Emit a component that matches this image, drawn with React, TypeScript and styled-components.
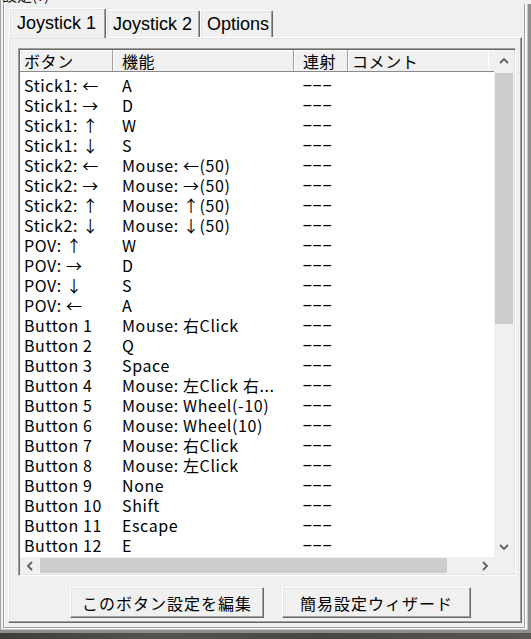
import React from "react";
import styled, { createGlobalStyle } from "styled-components";

const Global = createGlobalStyle`
  html, body { margin: 0; padding: 0; background: #f0f0f0; }
  body { width: 531px; height: 639px; overflow: hidden; }
  * { box-sizing: border-box; }
`;

const UI_FONT = `"Noto Sans CJK JP", "Noto Sans", sans-serif`;

const Screen = styled.div`
  width: 531px;
  height: 639px;
  display: flex;
  flex-direction: column;
  background: #f0f0f0;
  overflow: hidden;
  font-family: ${UI_FONT};
  color: #000;
`;

const TitleClip = styled.div`
  height: 4px;
  flex: none;
  overflow: hidden;
  border-left: 1px solid #a0a0a0;
`;

const TitleText = styled.div`
  margin-top: -13px;
  padding-left: 1px;
  font-size: 15px;
  line-height: 16px;
  color: #222;
`;

const Window = styled.div`
  height: 629px;
  flex: none;
  display: flex;
  flex-direction: column;
  border-left: 1px solid #a0a0a0;
  border-right: 3px solid #8e8e8e;
  border-bottom: 3px solid #8e8e8e;
  box-shadow: inset -1px -1px 0 #c8c8c8;
`;

const GroupBox = styled.div`
  flex: 1;
  margin: 0 3px 2px 2px;
  padding: 4px 2px 4px 4px;
  border-left: 1px solid #a0a0a0;
  border-right: 1px solid #a0a0a0;
  border-bottom: 1px solid #a0a0a0;
  box-shadow: inset 1px 0 0 #fff, 1px 0 0 #fff, 0 1px 0 #fff;
  display: flex;
  flex-direction: column;
`;

const TabStrip = styled.div`
  height: 29px;
  flex: none;
  display: flex;
  align-items: flex-end;
  padding-left: 1px;
`;

const Tab = styled.div<{ $active?: boolean; $w: number }>`
  position: relative;
  z-index: ${(p) => (p.$active ? 2 : 1)};
  width: ${(p) => p.$w}px;
  height: ${(p) => (p.$active ? "30px" : "27px")};
  margin-bottom: ${(p) => (p.$active ? "-1px" : "0")};
  padding: ${(p) => (p.$active ? "3px 0 0 7px" : "0 0 0 6px")};
  display: flex;
  align-items: ${(p) => (p.$active ? "flex-start" : "center")};
  background: #f0f0f0;
  border-top: 1px solid #fff;
  border-left: 1px solid #fff;
  border-right: 1px solid #696969;
  box-shadow: inset -1px 0 0 #a0a0a0, inset 1px 1px 0 #e3e3e3;
  border-radius: 2px 2px 0 0;
  font-family: "Liberation Sans", Arial, sans-serif;
  font-size: 18px;
  line-height: 23px;
  white-space: nowrap;
`;

const Pane = styled.div`
  flex: 1;
  display: flex;
  flex-direction: column;
  padding: 10px 1px 4px 9px;
  border-top: 1px solid #fff;
  border-left: 1px solid #fff;
  border-right: 1px solid #696969;
  border-bottom: 1px solid #696969;
  box-shadow: inset -1px -1px 0 #a0a0a0, inset 1px 1px 0 #e3e3e3;
`;

const ListView = styled.div`
  width: 498px;
  height: 528px;
  flex: none;
  border: 1px solid;
  border-color: #a0a0a0 #fff #fff #a0a0a0;
  box-shadow: inset 1px 1px 0 #696969, inset -1px -1px 0 #e3e3e3;
  padding: 1px;
  background: #fff;
  display: grid;
  grid-template-columns: 474px 20px;
  grid-template-rows: 507px 17px;
`;

const Content = styled.div`
  overflow: hidden;
  display: flex;
  flex-direction: column;
  background: #fff;
`;

const COLS = "93px 181px 54px 140px 6px";

const HeaderRow = styled.div`
  height: 22px;
  flex: none;
  display: grid;
  grid-template-columns: ${COLS};
  background: #f0f0f0;
  border-bottom: 1px solid #8a8a8a;
`;

const HeaderCell = styled.div<{ $pad: number; $last?: boolean }>`
  padding-left: ${(p) => p.$pad}px;
  padding-top: 2px;
  border-right: ${(p) => (p.$last ? "none" : "1px solid #a0a0a0")};
  box-shadow: inset 1px 1px 0 #fff;
  font-size: 16px;
  letter-spacing: 0.6px;
  line-height: 19px;
  white-space: nowrap;
`;

const Body = styled.div`
  padding-top: 3px;
  display: flex;
  flex-direction: column;
`;

const Row = styled.div`
  height: 20px;
  flex: none;
  display: grid;
  grid-template-columns: ${COLS};
  align-items: center;
`;

const Cell = styled.div<{ $pad: number }>`
  padding-left: ${(p) => p.$pad}px;
  font-size: 16px;
  letter-spacing: 0.6px;
  line-height: 20px;
  white-space: nowrap;
`;

const DashCell = styled.div`
  height: 20px;
  padding-left: 8px;
  display: flex;
  align-items: center;
  white-space: nowrap;
`;

const Dashes = styled.span`
  display: block;
  font-family: "Liberation Sans", Arial, sans-serif;
  font-size: 16px;
  line-height: 18px;
  letter-spacing: -0.4px;
  transform: scaleX(2);
  transform-origin: left center;
`;

const VScroll = styled.div`
  background: #f0f0f0;
  display: flex;
  flex-direction: column;
`;

const HScroll = styled.div`
  background: #f0f0f0;
  display: flex;
  align-items: stretch;
`;

const Corner = styled.div`
  background: #f0f0f0;
`;

const ArrowBox = styled.div<{ $w: number; $h: number }>`
  width: ${(p) => p.$w}px;
  height: ${(p) => p.$h}px;
  flex: none;
  display: flex;
  align-items: center;
  justify-content: center;
`;

const VThumb = styled.div`
  height: 251px;
  margin: 2px 1px 0 1px;
  flex: none;
  background: #cdcdcd;
`;

const HThumb = styled.div`
  width: 407px;
  margin: 1px 0;
  flex: none;
  background: #cdcdcd;
`;

const Spacer = styled.div`
  flex: 1;
`;

const ButtonRow = styled.div`
  margin-top: 11px;
  display: flex;
  gap: 18px;
  padding-left: 52px;
`;

const PushButton = styled.button<{ $w: number }>`
  width: ${(p) => p.$w}px;
  height: 31px;
  padding: 0;
  background: #f0f0f0;
  border: 1px solid;
  border-color: #fff #696969 #696969 #fff;
  box-shadow: inset -1px -1px 0 #a0a0a0, inset 1px 1px 0 #e3e3e3;
  font-family: ${UI_FONT};
  font-size: 16px;
  letter-spacing: 1px;
  color: #000;
  line-height: 28px;
`;

const Desktop = styled.div`
  flex: 1;
  background: linear-gradient(90deg, #3e3d39, #55534d 30%, #47463f 60%, #5a5850);
`;

function Chevron({ dir }: { dir: "up" | "down" | "left" | "right" }) {
  const pts: Record<string, string> = {
    up: "1,6 5,2 9,6",
    down: "1,2 5,6 9,2",
    left: "6,1 2,5 6,9",
    right: "3,1 7,5 3,9",
  };
  const vertical = dir === "up" || dir === "down";
  return (
    <svg width={vertical ? 10 : 9} height={vertical ? 8 : 10} viewBox={vertical ? "0 0 10 8" : "0 0 9 10"}>
      <polyline points={pts[dir]} fill="none" stroke="#606060" strokeWidth="1.8" />
    </svg>
  );
}

const rows: [string, string][] = [
  ["Stick1: ←", "A"],
  ["Stick1: →", "D"],
  ["Stick1: ↑", "W"],
  ["Stick1: ↓", "S"],
  ["Stick2: ←", "Mouse: ←(50)"],
  ["Stick2: →", "Mouse: →(50)"],
  ["Stick2: ↑", "Mouse: ↑(50)"],
  ["Stick2: ↓", "Mouse: ↓(50)"],
  ["POV: ↑", "W"],
  ["POV: →", "D"],
  ["POV: ↓", "S"],
  ["POV: ←", "A"],
  ["Button 1", "Mouse: 右Click"],
  ["Button 2", "Q"],
  ["Button 3", "Space"],
  ["Button 4", "Mouse: 左Click 右..."],
  ["Button 5", "Mouse: Wheel(-10)"],
  ["Button 6", "Mouse: Wheel(10)"],
  ["Button 7", "Mouse: 右Click"],
  ["Button 8", "Mouse: 左Click"],
  ["Button 9", "None"],
  ["Button 10", "Shift"],
  ["Button 11", "Escape"],
  ["Button 12", "E"],
];

export default function App() {
  return (
    <Screen>
      <Global />
      <TitleClip>
        <TitleText>設定(?)</TitleText>
      </TitleClip>
      <Window>
        <GroupBox>
          <TabStrip>
            <Tab $active $w={97}>Joystick 1</Tab>
            <Tab $w={94}>Joystick 2</Tab>
            <Tab $w={73}>Options</Tab>
          </TabStrip>
          <Pane>
            <ListView>
              <Content>
                <HeaderRow>
                  <HeaderCell $pad={4}>ボタン</HeaderCell>
                  <HeaderCell $pad={9}>機能</HeaderCell>
                  <HeaderCell $pad={9}>連射</HeaderCell>
                  <HeaderCell $pad={4} $last>コメント</HeaderCell>
                  <HeaderCell $pad={0} $last />
                </HeaderRow>
                <Body>
                  {rows.map(([btn, fn]) => (
                    <Row key={btn}>
                      <Cell $pad={4}>{btn}</Cell>
                      <Cell $pad={9}>{fn}</Cell>
                      <DashCell>
                        <Dashes>---</Dashes>
                      </DashCell>
                      <Cell $pad={4}></Cell>
                    </Row>
                  ))}
                </Body>
              </Content>
              <VScroll>
                <ArrowBox $w={20} $h={21}>
                  <Chevron dir="up" />
                </ArrowBox>
                <VThumb />
                <Spacer />
                <ArrowBox $w={20} $h={21}>
                  <Chevron dir="down" />
                </ArrowBox>
              </VScroll>
              <HScroll>
                <ArrowBox $w={20} $h={17}>
                  <Chevron dir="left" />
                </ArrowBox>
                <HThumb />
                <Spacer />
                <ArrowBox $w={20} $h={17}>
                  <Chevron dir="right" />
                </ArrowBox>
              </HScroll>
              <Corner />
            </ListView>
            <ButtonRow>
              <PushButton $w={194}>このボタン設定を編集</PushButton>
              <PushButton $w={189}>簡易設定ウィザード</PushButton>
            </ButtonRow>
          </Pane>
        </GroupBox>
      </Window>
      <Desktop />
    </Screen>
  );
}
